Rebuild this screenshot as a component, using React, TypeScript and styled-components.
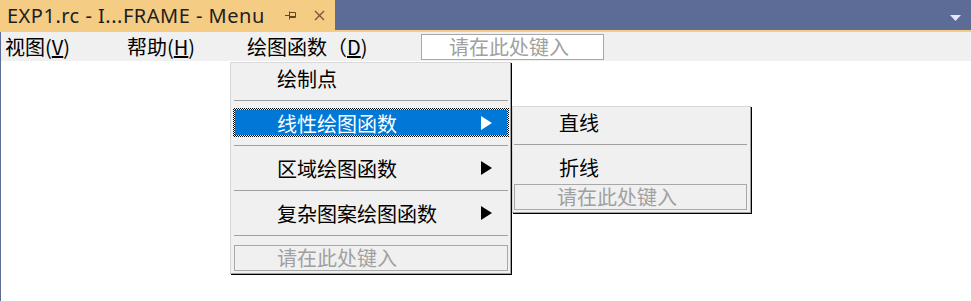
import React from "react";
import styled, { createGlobalStyle } from "styled-components";

const GlobalStyle = createGlobalStyle`
  html, body {
    margin: 0;
    padding: 0;
    background: #ffffff;
    overflow: hidden;
  }
`;

const CJK = `"Noto Sans CJK SC", "Noto Sans", sans-serif`;

const Frame = styled.div`
  width: 971px;
  height: 301px;
  display: flex;
  flex-direction: column;
  background: #ffffff;
`;

/** tab strip */
const TopBar = styled.div`
  display: flex;
  align-items: stretch;
  height: 30px;
  background: #5d6b97;
  border-bottom: 2px solid #f5cc84;
`;

const Tab = styled.div`
  display: flex;
  align-items: center;
  width: 335px;
  padding-left: 7px;
  box-sizing: border-box;
  background: #f5cc84;
  color: #1e1e1e;
  font-family: "Noto Sans", "Open Sans", sans-serif;
  font-size: 20px;
  letter-spacing: 0.5px;
  white-space: nowrap;
`;

const TabTitle = styled.span`
  width: 271px;
  padding-top: 1px;
`;

const TabButton = styled.span<{ $width: number }>`
  display: flex;
  align-items: center;
  justify-content: center;
  width: ${(p) => p.$width}px;
  height: 30px;
`;

const Spacer = styled.div`
  flex: 1;
`;

const OverflowButton = styled.div`
  display: flex;
  align-items: center;
  padding: 5px 10px 0 0;
`;

const Body = styled.div`
  position: relative;
  flex: 1;
  border-left: 1px solid #5d6b97;
`;

/** menu bar */
const MenuBar = styled.div`
  display: flex;
  align-items: center;
  height: 29px;
  padding-left: 4px;
  background: #f0f0f0;
  font-family: ${CJK};
  font-size: 20px;
  color: #000;
`;

const TopItem = styled.div<{ $width: number }>`
  width: ${(p) => p.$width}px;
  white-space: nowrap;
  line-height: 29px;
`;

const TypeHere = styled.div<{ $menuBar?: boolean }>`
  box-sizing: border-box;
  height: 26px;
  border: 1px solid #a8a8a8;
  background: ${(p) => (p.$menuBar ? "#ffffff" : "transparent")};
  color: #a0a0a0;
  font-family: ${CJK};
  font-size: 20px;
  line-height: 24px;
  white-space: nowrap;
  padding-left: ${(p) => (p.$menuBar ? 27 : 42)}px;
  width: ${(p) => (p.$menuBar ? "183px" : "auto")};
  margin: ${(p) => (p.$menuBar ? "1px 0 0 0" : "0")};
`;

/** drop-down menus */
const Popup = styled.div<{ $top: number; $left: number; $width: number }>`
  position: absolute;
  top: ${(p) => p.$top}px;
  left: ${(p) => p.$left}px;
  width: ${(p) => p.$width}px;
  box-sizing: border-box;
  display: flex;
  flex-direction: column;
  background: #f0f0f0;
  border: 1px solid #d8d8d8;
  border-right-color: #a0a0a0;
  border-bottom-color: #a0a0a0;
  box-shadow: 1px 1px 0 #000;
  font-family: ${CJK};
  font-size: 20px;
  color: #000;
`;

const Item = styled.div<{ $active?: boolean }>`
  position: relative;
  display: flex;
  align-items: center;
  box-sizing: border-box;
  height: 29px;
  margin: 0 1px 0 2px;
  padding: 1px 16px 0 42px;
  border: 2px solid transparent;
  white-space: nowrap;
  color: ${(p) => (p.$active ? "#ffffff" : "#000000")};
  background: ${(p) =>
    p.$active
      ? "linear-gradient(#0078d7, #0078d7) padding-box, repeating-conic-gradient(#000 0 25%, #fff 0 50%) 0 0 / 2px 2px border-box"
      : "transparent"};
`;

const ItemLabel = styled.span`
  flex: 1;
`;

const Arrow = styled.span<{ $active?: boolean }>`
  width: 0;
  height: 0;
  margin-right: -1px;
  border-top: 7px solid transparent;
  border-bottom: 7px solid transparent;
  border-left: 11px solid ${(p) => (p.$active ? "#ffffff" : "#000000")};
`;

const Separator = styled.div<{ $l: number; $r: number }>`
  height: 1px;
  margin: 8px ${(p) => p.$r}px 7px ${(p) => p.$l}px;
  background: #a0a0a0;
`;

const BoxSlot = styled.div<{ $top: number; $l: number; $r: number }>`
  margin: ${(p) => p.$top}px ${(p) => p.$r}px 2px ${(p) => p.$l}px;
  display: flex;
  flex-direction: column;
`;

const PinIcon = () => (
  <svg width="12" height="9" viewBox="0 0 12 9">
    <path
      d="M0 4.5H4.5M4.5 0.5V8.5M4.5 1.5H10.5V6.5H4.5M4.5 5.5H10.5"
      stroke="#5e4a22"
      strokeWidth="1"
      fill="none"
    />
  </svg>
);

const CloseIcon = () => (
  <svg width="11" height="11" viewBox="0 0 11 11">
    <path d="M1 1L10 10M10 1L1 10" stroke="#6e5a36" strokeWidth="1.4" fill="none" />
  </svg>
);

const DropIcon = () => (
  <svg width="11" height="6" viewBox="0 0 11 6">
    <polygon points="0,0 11,0 5.5,6" fill="#e4e8f6" />
  </svg>
);

const lineMenu = ["直线", "折线"];

const drawMenu = [
  { label: "绘制点", sub: false },
  { label: "线性绘图函数", sub: true, active: true },
  { label: "区域绘图函数", sub: true },
  { label: "复杂图案绘图函数", sub: true },
];

export default function App() {
  return (
    <Frame>
      <GlobalStyle />
      <TopBar>
        <Tab>
          <TabTitle>EXP1.rc - I...FRAME - Menu</TabTitle>
          <TabButton $width={26}>
            <PinIcon />
          </TabButton>
          <TabButton $width={30}>
            <CloseIcon />
          </TabButton>
        </Tab>
        <Spacer />
        <OverflowButton>
          <DropIcon />
        </OverflowButton>
      </TopBar>

      <Body>
        <MenuBar>
          <TopItem $width={122}>
            视图(<u>V</u>)
          </TopItem>
          <TopItem $width={120}>
            帮助(<u>H</u>)
          </TopItem>
          <TopItem $width={174}>
            绘图函数（<u>D</u>)
          </TopItem>
          <TypeHere $menuBar>请在此处键入</TypeHere>
        </MenuBar>

        <Popup $top={30} $left={229} $width={281}>
          {drawMenu.map((m, i) => (
            <React.Fragment key={m.label}>
              {i > 0 && <Separator $l={3} $r={2} />}
              <Item $active={m.active}>
                <ItemLabel>{m.label}</ItemLabel>
                {m.sub && <Arrow $active={m.active} />}
              </Item>
            </React.Fragment>
          ))}
          <Separator $l={3} $r={2} />
          <BoxSlot $top={2} $l={3} $r={2}>
            <TypeHere>请在此处键入</TypeHere>
          </BoxSlot>
        </Popup>

        <Popup $top={74} $left={511} $width={239}>
          <Item>
            <ItemLabel>{lineMenu[0]}</ItemLabel>
          </Item>
          <Separator $l={1} $r={3} />
          <Item>
            <ItemLabel>{lineMenu[1]}</ItemLabel>
          </Item>
          <BoxSlot $top={3} $l={1} $r={3}>
            <TypeHere>请在此处键入</TypeHere>
          </BoxSlot>
        </Popup>
      </Body>
    </Frame>
  );
}
